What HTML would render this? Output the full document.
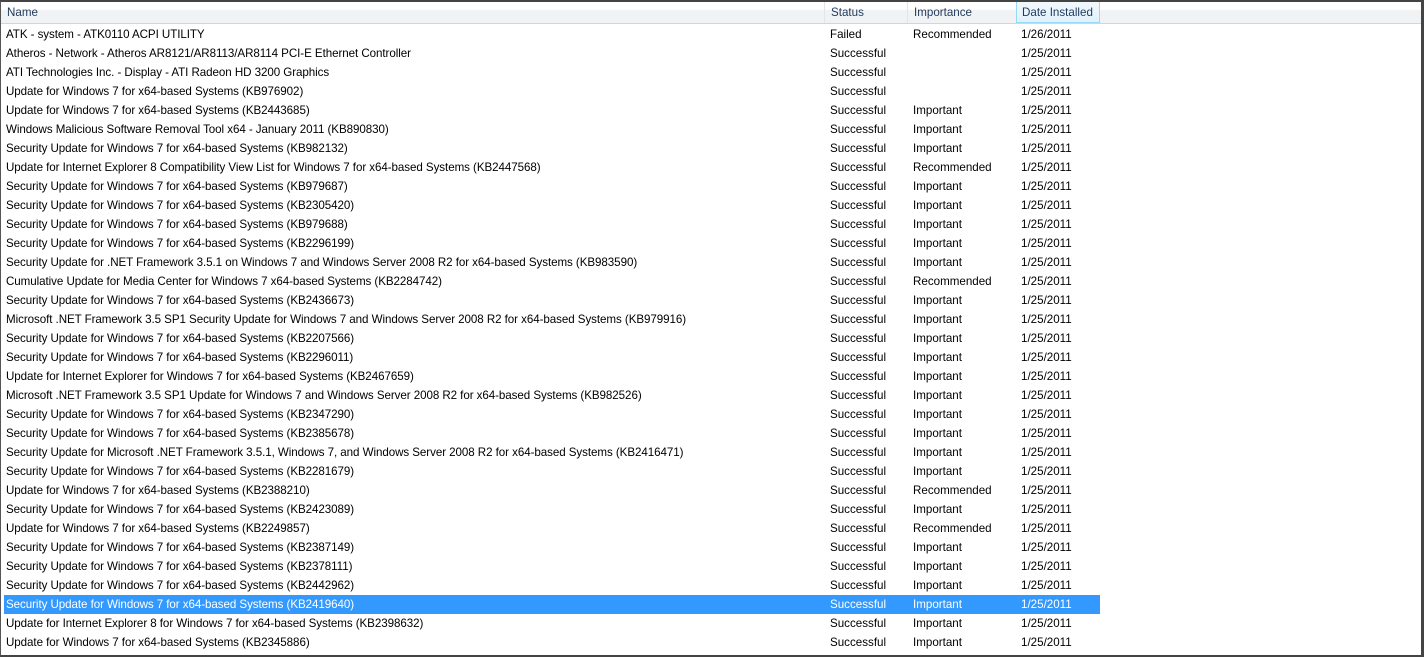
<!DOCTYPE html><html><head><style>
body{margin:0;width:1424px;height:657px;overflow:hidden;background:#fff;font-family:"Liberation Sans",sans-serif;font-size:11.6px;color:#000}
.win{position:absolute;left:0;top:0;width:1420px;height:653px;border-left:1px solid #555;border-top:2px solid #444;border-right:3px solid #444;border-bottom:2px solid #444;background:#fff}
.hdr{position:absolute;left:0;top:0;width:1420px;height:21px;background:linear-gradient(#fff 0,#fff 35%,#f1f2f4 40%,#f1f2f4);border-bottom:1px solid #d5d5d5}
.h{position:absolute;top:0;height:21px;line-height:22px;border-right:1px solid #e3e5e8;padding-left:6px;box-sizing:border-box;color:#1e395b}
.hs{background:linear-gradient(#f2f9fd,#e1f2fb);border:1px solid #96d9f9;border-top:none}
.r{position:absolute;left:3px;width:1096px;height:19px;line-height:19px}
.r span{position:absolute;top:0;white-space:nowrap}
.sel{background:#3399ff;color:#fff}
</style></head><body><div class="win">
<div class="hdr">
<div class="h" style="left:0;width:824px">Name</div>
<div class="h" style="left:824px;width:83px">Status</div>
<div class="h" style="left:907px;width:109px">Importance</div>
<div class="h hs" style="left:1015px;width:84px;padding-left:5px">Date Installed</div>
</div>
<div id="rows"></div>
</div>
<script>
var d=[["ATK - system - ATK0110 ACPI UTILITY","Failed","Recommended","1/26/2011"],
["Atheros - Network - Atheros AR8121/AR8113/AR8114 PCI-E Ethernet Controller","Successful",""],
["ATI Technologies Inc. - Display - ATI Radeon HD 3200 Graphics","Successful",""],
["Update for Windows 7 for x64-based Systems (KB976902)","Successful",""],
["Update for Windows 7 for x64-based Systems (KB2443685)","Successful","Important"],
["Windows Malicious Software Removal Tool x64 - January 2011 (KB890830)","Successful","Important"],
["Security Update for Windows 7 for x64-based Systems (KB982132)","Successful","Important"],
["Update for Internet Explorer 8 Compatibility View List for Windows 7 for x64-based Systems (KB2447568)","Successful","Recommended"],
["Security Update for Windows 7 for x64-based Systems (KB979687)","Successful","Important"],
["Security Update for Windows 7 for x64-based Systems (KB2305420)","Successful","Important"],
["Security Update for Windows 7 for x64-based Systems (KB979688)","Successful","Important"],
["Security Update for Windows 7 for x64-based Systems (KB2296199)","Successful","Important"],
["Security Update for .NET Framework 3.5.1 on Windows 7 and Windows Server 2008 R2 for x64-based Systems (KB983590)","Successful","Important"],
["Cumulative Update for Media Center for Windows 7 x64-based Systems (KB2284742)","Successful","Recommended"],
["Security Update for Windows 7 for x64-based Systems (KB2436673)","Successful","Important"],
["Microsoft .NET Framework 3.5 SP1 Security Update for Windows 7 and Windows Server 2008 R2 for x64-based Systems (KB979916)","Successful","Important"],
["Security Update for Windows 7 for x64-based Systems (KB2207566)","Successful","Important"],
["Security Update for Windows 7 for x64-based Systems (KB2296011)","Successful","Important"],
["Update for Internet Explorer for Windows 7 for x64-based Systems (KB2467659)","Successful","Important"],
["Microsoft .NET Framework 3.5 SP1 Update for Windows 7 and Windows Server 2008 R2 for x64-based Systems (KB982526)","Successful","Important"],
["Security Update for Windows 7 for x64-based Systems (KB2347290)","Successful","Important"],
["Security Update for Windows 7 for x64-based Systems (KB2385678)","Successful","Important"],
["Security Update for Microsoft .NET Framework 3.5.1, Windows 7, and Windows Server 2008 R2 for x64-based Systems (KB2416471)","Successful","Important"],
["Security Update for Windows 7 for x64-based Systems (KB2281679)","Successful","Important"],
["Update for Windows 7 for x64-based Systems (KB2388210)","Successful","Recommended"],
["Security Update for Windows 7 for x64-based Systems (KB2423089)","Successful","Important"],
["Update for Windows 7 for x64-based Systems (KB2249857)","Successful","Recommended"],
["Security Update for Windows 7 for x64-based Systems (KB2387149)","Successful","Important"],
["Security Update for Windows 7 for x64-based Systems (KB2378111)","Successful","Important"],
["Security Update for Windows 7 for x64-based Systems (KB2442962)","Successful","Important"],
["Security Update for Windows 7 for x64-based Systems (KB2419640)","Successful","Important"],
["Update for Internet Explorer 8 for Windows 7 for x64-based Systems (KB2398632)","Successful","Important"],
["Update for Windows 7 for x64-based Systems (KB2345886)","Successful","Important"]];
var h="";
d.forEach(function(r,i){h+='<div class="r'+(i==30?' sel':'')+'" style="top:'+(23+19*i)+'px"><span style="left:2px;letter-spacing:-0.07px">'+r[0]+'</span><span style="left:826px">'+r[1]+'</span><span style="left:909px">'+r[2]+'</span><span style="left:1017px">'+(r[3]||"1/25/2011")+'</span></div>';});
document.getElementById("rows").innerHTML=h;
</script>
</body></html>
